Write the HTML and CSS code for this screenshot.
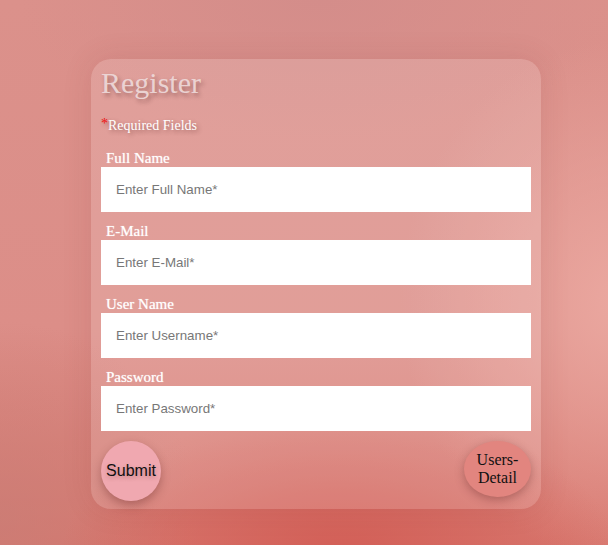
FILE: index.html
```html
<!DOCTYPE html>
<html>
<head>
<meta charset="utf-8">
<link rel="stylesheet" href="styles.css">
</head>
<body>
<div class="stage">
  <form class="card">
    <h1 class="title">Register</h1>
    <p class="required"><span class="star">*</span>Required Fields</p>
    <label class="label">Full Name</label>
    <input class="field" type="text" placeholder="Enter Full Name*">
    <label class="label">E-Mail</label>
    <input class="field" type="text" placeholder="Enter E-Mail*">
    <label class="label">User Name</label>
    <input class="field" type="text" placeholder="Enter Username*">
    <label class="label">Password</label>
    <input class="field" type="password" placeholder="Enter Password*">
    <div class="actions">
      <button type="button" class="btn-submit">Submit</button>
      <button type="button" class="btn-users">Users-<br>Detail</button>
    </div>
  </form>
</div>
</body>
</html>
```

FILE: styles.css
```css
html, body {
  margin: 0;
  padding: 0;
  height: 100%;
}
body {
  background:
    radial-gradient(ellipse 280px 150px at 340px 560px, rgba(210, 92, 84, 0.95), rgba(210, 92, 84, 0) 100%),
    radial-gradient(ellipse 220px 260px at 620px 300px, rgba(236, 170, 162, 0.9), rgba(236, 170, 162, 0) 100%),
    radial-gradient(ellipse 200px 200px at 0px 520px, rgba(200, 125, 118, 0.7), rgba(200, 125, 118, 0) 100%),
    radial-gradient(ellipse 300px 140px at 320px 0px, rgba(210, 140, 138, 0.8), rgba(210, 140, 138, 0) 100%),
    linear-gradient(180deg, #db918b 0%, #dc8e88 60%, #d8786f 100%);
  font-family: "Liberation Serif", "Times New Roman", serif;
  overflow: hidden;
}
.stage {
  padding: 59px 0 0 91px;
}
.card {
  width: 430px;
  height: 436px;
  padding: 6px 10px 8px 10px;
  border-radius: 20px;
  background: rgba(255, 255, 255, 0.14);
  box-shadow: 0 0 30px rgba(120, 40, 40, 0.12);
  display: flex;
  flex-direction: column;
}
.title {
  margin: 0;
  font-size: 30px;
  font-weight: normal;
  line-height: 36px;
  color: rgba(238, 218, 218, 0.92);
  text-shadow: 2px 3px 4px rgba(70, 30, 30, 0.4);
}
.required {
  margin: 17px 0 0 0;
  font-size: 14px;
  line-height: 16px;
  color: #fff;
  text-shadow: 2px 2px 4px rgba(90, 40, 40, 0.45);
}
.star {
  color: #f01010;
  font-size: 14px;
  position: relative;
  top: -2px;
}
.label {
  display: block;
  margin-top: 16px;
  padding-left: 5px;
  font-size: 15px;
  line-height: 17px;
  color: #fff;
  text-shadow: 0 0 1px rgba(255, 255, 255, 0.7);
}
.field + .label {
  margin-top: 11px;
}
.field {
  display: block;
  box-sizing: border-box;
  width: 430px;
  height: 45px;
  border: none;
  outline: none;
  padding: 0 15px;
  background: #fff;
  font-family: "Liberation Sans", Arial, sans-serif;
  font-size: 13.33px;
  color: #333;
}
.field::placeholder {
  color: #777;
}
.actions {
  margin-top: 10px;
  display: flex;
  justify-content: space-between;
  align-items: flex-start;
}
.btn-submit {
  width: 60px;
  height: 60px;
  border: none;
  border-radius: 50%;
  padding: 0;
  background: #f0a8b0;
  font-family: "Liberation Sans", Arial, sans-serif;
  font-size: 16px;
  color: #111;
  box-shadow: 0 4px 10px rgba(90, 30, 30, 0.35);
  text-shadow: 0 2px 4px rgba(90, 30, 30, 0.3);
}
.btn-users {
  width: 67px;
  height: 56px;
  border: none;
  border-radius: 50%;
  padding: 0;
  background: #e2857f;
  font-family: "Liberation Serif", "Times New Roman", serif;
  font-size: 16px;
  line-height: 18px;
  color: #111;
  box-shadow: 0 3px 10px rgba(90, 30, 30, 0.35);
}
```
